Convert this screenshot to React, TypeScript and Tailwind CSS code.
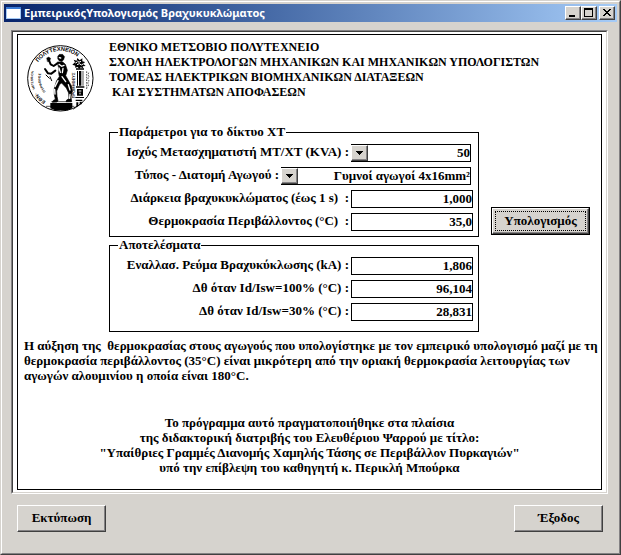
import type { ComponentProps, ReactNode } from 'react';

const RAISED =
  'border border-t-white border-l-white border-r-[#404040] border-b-[#404040] bg-[#d6d3ce] shadow-[inset_-1px_-1px_0_#848284]';

const CAPTION_BUTTON = `flex h-[14px] w-4 items-center justify-center ${RAISED}`;

const TitleBar = () => (
  <header className="flex h-[18px] items-center bg-linear-to-r from-[#08246b] to-[#a5cbf7] pr-[2px] pl-[2px]">
    <svg className="mr-[2px] h-4 w-4" viewBox="0 0 16 16" shapeRendering="crispEdges" aria-hidden="true">
      <rect x="0" y="2" width="15" height="12" fill="#a5cbf7" />
      <rect x="1" y="4" width="13" height="9" fill="#fff" />
      <rect x="0" y="2" width="15" height="2" fill="#3a7bd6" />
    </svg>
    <h1 className="flex-1 truncate font-['Noto_Sans',sans-serif] text-[11px] leading-[18px] font-bold text-white">
      ΕμπειρικόςΥπολογισμός Βραχυκυκλώματος
    </h1>
    <button type="button" aria-label="Ελαχιστοποίηση" className={CAPTION_BUTTON}>
      <svg className="h-3 w-3" viewBox="0 0 12 12" shapeRendering="crispEdges">
        <rect x="2" y="8" width="6" height="2" />
      </svg>
    </button>
    <button type="button" aria-label="Μεγιστοποίηση" className={CAPTION_BUTTON}>
      <svg className="h-3 w-3" viewBox="0 0 12 12" shapeRendering="crispEdges">
        <path d="M1 1h9v9H1zM2 3v6h7V3z" fillRule="evenodd" />
      </svg>
    </button>
    <button type="button" aria-label="Κλείσιμο" className={`ml-[2px] ${CAPTION_BUTTON}`}>
      <svg className="h-3 w-3" viewBox="0 0 12 12" shapeRendering="crispEdges">
        <path d="M2 2h2v1h1v1h2V3h1V2h2v1H9v1H8v1H7v1h1v1h1v1h1v1H8V8H7V7H5v1H4v1H2V8h1V7h1V6h1V5H4V4H3V3H2z" />
      </svg>
    </button>
  </header>
);

const Seal = () => (
  <svg
    className="h-[67px] w-[67px] shrink-0 overflow-visible"
    viewBox="21 29 201 201"
    role="img"
    aria-label="Έμβλημα ΕΜΠ"
  >
    <defs>
      <path id="seal-foot" d="M77 198A82 82 0 0 1 46 162" />
      <path id="seal-side" d="M45 161A82 82 0 0 1 41 110" />
      <path id="seal-top" d="M54 81A82 82 0 0 1 192 88" />
      <path id="seal-left" d="M77 168A60 60 0 0 1 65 108" />
      <path id="seal-right" d="M164 189V104" />
    </defs>
    <circle cx="121" cy="129" r="98" fill="#fff" stroke="#000" strokeWidth="3" />
    <g fontFamily="'Liberation Sans', sans-serif" fontSize="15" fill="#000">
      <text>
        <textPath href="#seal-foot">ΕΘΝ·</textPath>
      </text>
      <text fontSize="9">
        <textPath href="#seal-side">ΜΕΤΣΟΒΙΟΝ</textPath>
      </text>
      <text fontSize="17">
        <textPath href="#seal-top">ΠΟΛΥΤΕΧΝΕΙΟΝ</textPath>
      </text>
      <text fontSize="10" fontWeight="bold">
        <textPath href="#seal-left">ΠΥΡΦΟΡΟΣ</textPath>
      </text>
      <text fontSize="12" fontWeight="bold">
        <textPath href="#seal-right">ΠΡΟΜΗΘΕΥΣ</textPath>
      </text>
    </g>
    {/* Prometheus */}
    <g fill="#000" stroke="#000" strokeLinejoin="round" strokeLinecap="round">
      <path d="M113 63l5-6 10 0 6 7-3 9-6 6-8-3-4-6z" strokeWidth="1" />
      <path
        d="M113 80l15 0 8 7 6 18-5 16 8 14 9 16 3 16-4 18 2 14h-17l2-5 7-4-1-17-7-15-14-15-6 4-9 20 1 16 3 14-3 3-14 1 2-5 7-4-3-14 0-20 7-22 8-12-2-12 1-8z"
        strokeWidth="2"
      />
      <path d="M112 84l-11 8-9-5-5-12" fill="none" strokeWidth="6" />
      <path d="M80 68l6-3 6 4-3 9-6 1z" strokeWidth="1" />
      <path d="M106 106l-12 9-10-1-9-13" fill="none" strokeWidth="6" />
      <path d="M78 119l10 10M90 124l5 12" fill="none" strokeWidth="3" />
    </g>
    <g fill="none" stroke="#fff" strokeLinecap="round" strokeWidth="4">
      <path d="M117 87l8 6 7-3M117 98l4 13M129 99l-2 13M126 124l11 15M145 148l5 16M114 136l-9 18M104 162l1 14M150 177l-1 12M118 67l4 1" />
    </g>
    <path d="M91 203h66v16l-15 6h-37l-14-6z" />
    <path d="M94 199h60" stroke="#000" strokeWidth="2" />
    {/* column with the flame */}
    <g fill="#000">
      <path d="M157 88l8-7-4-8 9 3 2-8 7 7 8-6v9l8 2-5 6 7 6-9 1 2 6-8-3-4 5-5-6-8 2 1-6z" />
      <path d="M168 99h24v4h-24zM171 107h3v44h-3zM177 107h7v44h-7zM188 107h2v44h-2zM168 153h25v4h-25zM171 161h18v20h-18zM166 185h26v3h-26zM167 193h20v4h-20zM169 201h6v12h-6zM179 199h6v8h-6z" />
    </g>
    <path
      d="M166 83l6-3M173 76l3 5 7-3M171 88l7-3 6 4 7-4M176 167h8M180 172v5"
      fill="none"
      stroke="#fff"
      strokeWidth="3"
    />
    <path
      d="M200 108v54M206 112l-2 6 3 6-3 6 3 7-4 6 3 6-4 7"
      fill="none"
      stroke="#000"
      strokeWidth="2"
      strokeDasharray="5 3"
    />
    <path d="M78 213h85M160 222l27-20" stroke="#000" strokeWidth="2" />
  </svg>
);

interface GroupProps {
  title: string;
  className?: string;
  children: ReactNode;
}

const Group = ({ title, className = '', children }: GroupProps) => (
  <fieldset className={`w-[370px] border border-black pl-2 ${className}`}>
    <legend className="px-[1px] leading-4">{title}</legend>
    <div className="flex flex-col gap-[5px] pt-1">{children}</div>
  </fieldset>
);

interface RowProps {
  id: string;
  label: string;
  className?: string;
  children: ReactNode;
}

const Row = ({ id, label, className = 'pr-[5px]', children }: RowProps) => (
  <div className={`flex h-[18px] items-start justify-end gap-[2px] ${className}`}>
    <label htmlFor={id} className="leading-4 whitespace-pre">
      {label}
    </label>
    {children}
  </div>
);

const Field = (props: ComponentProps<'input'>) => (
  <input
    type="text"
    className="h-[18px] w-[122px] border border-black bg-white text-right leading-4 outline-none"
    {...props}
  />
);

interface DropDownProps {
  id: string;
  options: string[];
  className: string;
}

const DropDown = ({ id, options, className }: DropDownProps) => (
  <div className={`relative h-[18px] ${className}`}>
    <select
      id={id}
      className="block h-[18px] w-full appearance-none border border-l-0 border-black bg-white pl-4 leading-4 outline-none [text-align-last:right]"
    >
      {options.map((option) => (
        <option key={option}>{option}</option>
      ))}
    </select>
    <span
      className={`pointer-events-none absolute top-px left-0 flex h-4 w-[17px] items-center justify-center ${RAISED}`}
    >
      <svg className="h-1 w-[7px]" viewBox="0 0 7 4" shapeRendering="crispEdges" aria-hidden="true">
        <path d="M0 0h7v1H6v1H5v1H4v1H3V3H2V2H1V1H0z" />
      </svg>
    </span>
  </div>
);

const results = [
  { id: 'current', label: 'Εναλλασ. Ρεύμα Βραχυκύκλωσης (kA) :', value: '1,806' },
  { id: 'rise100', label: 'Δθ όταν Id/Isw=100% (°C) :', value: '96,104' },
  { id: 'rise30', label: 'Δθ όταν Id/Isw=30% (°C) :', value: '28,831' },
];

export default function App() {
  return (
    <div className="min-h-screen border border-t-[#d6d3ce] border-r-[#404040] border-b-[#404040] border-l-[#d6d3ce] bg-[#d6d3ce] font-['Liberation_Serif',serif] text-[13px] leading-[15px] font-bold text-black">
      <div className="flex min-h-[calc(100vh-2px)] flex-col border border-t-white border-r-[#848284] border-b-[#848284] border-l-white p-[2px]">
        <TitleBar />

        <main className="mt-2 mr-[9px] ml-[7px] border border-t-[#848284] border-r-white border-b-white border-l-[#848284]">
          <div className="border border-t-[#404040] border-r-[#d6d3ce] border-b-[#d6d3ce] border-l-[#404040] bg-white px-1 pt-[2px] pb-[2px]">
            <div className="border border-black pb-[14px]">
              <div className="flex gap-[15px] pt-[5px] pl-[9px]">
                <div className="pt-[5px]">
                  <Seal />
                </div>
                <h2 className="text-[12px] leading-[15px] whitespace-pre">
                  {'ΕΘΝΙΚΟ ΜΕΤΣΟΒΙΟ ΠΟΛΥΤΕΧΝΕΙΟ\nΣΧΟΛΗ ΗΛΕΚΤΡΟΛΟΓΩΝ ΜΗΧΑΝΙΚΩΝ ΚΑΙ ΜΗΧΑΝΙΚΩΝ ΥΠΟΛΟΓΙΣΤΩΝ\nΤΟΜΕΑΣ ΗΛΕΚΤΡΙΚΩΝ ΒΙΟΜΗΧΑΝΙΚΩΝ ΔΙΑΤΑΞΕΩΝ\n ΚΑΙ ΣΥΣΤΗΜΑΤΩΝ ΑΠΟΦΑΣΕΩΝ'}
                </h2>
              </div>

              <form className="mt-3 ml-[91px]" onSubmit={(e) => e.preventDefault()}>
                <div className="flex items-end gap-3">
                  <Group title="Παράμετροι για το δίκτυο ΧΤ" className="pb-[5px]">
                    <Row id="power" label="Ισχύς Μετασχηματιστή ΜΤ/ΧΤ (KVA) :" className="pr-[7px]">
                      <DropDown id="power" options={['50']} className="w-[120px]" />
                    </Row>
                    <Row id="conductor" label="Τύπος - Διατομή Αγωγού :" className="pr-[7px]">
                      <DropDown id="conductor" options={['Γυμνοί αγωγοί 4x16mm²']} className="w-[190px]" />
                    </Row>
                    <Row id="duration" label="Διάρκεια βραχυκυκλώματος (έως 1 s)  :">
                      <Field id="duration" defaultValue="1,000" />
                    </Row>
                    <Row id="ambient" label="Θερμοκρασία Περιβάλλοντος (°C)  :">
                      <Field id="ambient" defaultValue="35,0" />
                    </Row>
                  </Group>
                  <button type="submit" className="mb-[2px] h-7 w-[99px] border border-black">
                    <span className={`flex h-full items-center justify-center p-[2px] ${RAISED}`}>
                      <span className="flex h-full w-full items-center justify-center border border-dotted border-black pb-[2px]">
                        Υπολογισμός
                      </span>
                    </span>
                  </button>
                </div>

                <Group title="Αποτελέσματα" className="pb-[10px]">
                  {results.map(({ id, label, value }) => (
                    <Row key={id} id={id} label={label}>
                      <Field id={id} value={value} readOnly />
                    </Row>
                  ))}
                </Group>
              </form>

              <p className="mt-[6px] pl-[6px] whitespace-pre">
                {'Η αύξηση της  θερμοκρασίας στους αγωγούς που υπολογίστηκε με τον εμπειρικό υπολογισμό μαζί με τη\nθερμοκρασία περιβάλλοντος (35°C) είναι μικρότερη από την οριακή θερμοκρασία λειτουργίας των\nαγωγών αλουμινίου η οποία είναι 180°C.'}
              </p>
              <p className="mt-8 text-center whitespace-pre">
                {'Το πρόγραμμα αυτό πραγματοποιήθηκε στα πλαίσια\nτης διδακτορική διατριβής του Ελευθέριου Ψαρρού με τίτλο:\n"Υπαίθριες Γραμμές Διανομής Χαμηλής Τάσης σε Περιβάλλον Πυρκαγιών"\nυπό την επίβλεψη του καθηγητή κ. Περικλή Μπούρκα'}
              </p>
            </div>
          </div>
        </main>

        <footer className="mt-[11px] flex justify-between pr-[14px] pl-[13px]">
          <button type="button" className={`h-[27px] w-[89px] pb-[2px] ${RAISED}`}>
            Εκτύπωση
          </button>
          <button type="button" className={`h-[27px] w-[89px] pb-[2px] ${RAISED}`}>
            Έξοδος
          </button>
        </footer>
      </div>
    </div>
  );
}
